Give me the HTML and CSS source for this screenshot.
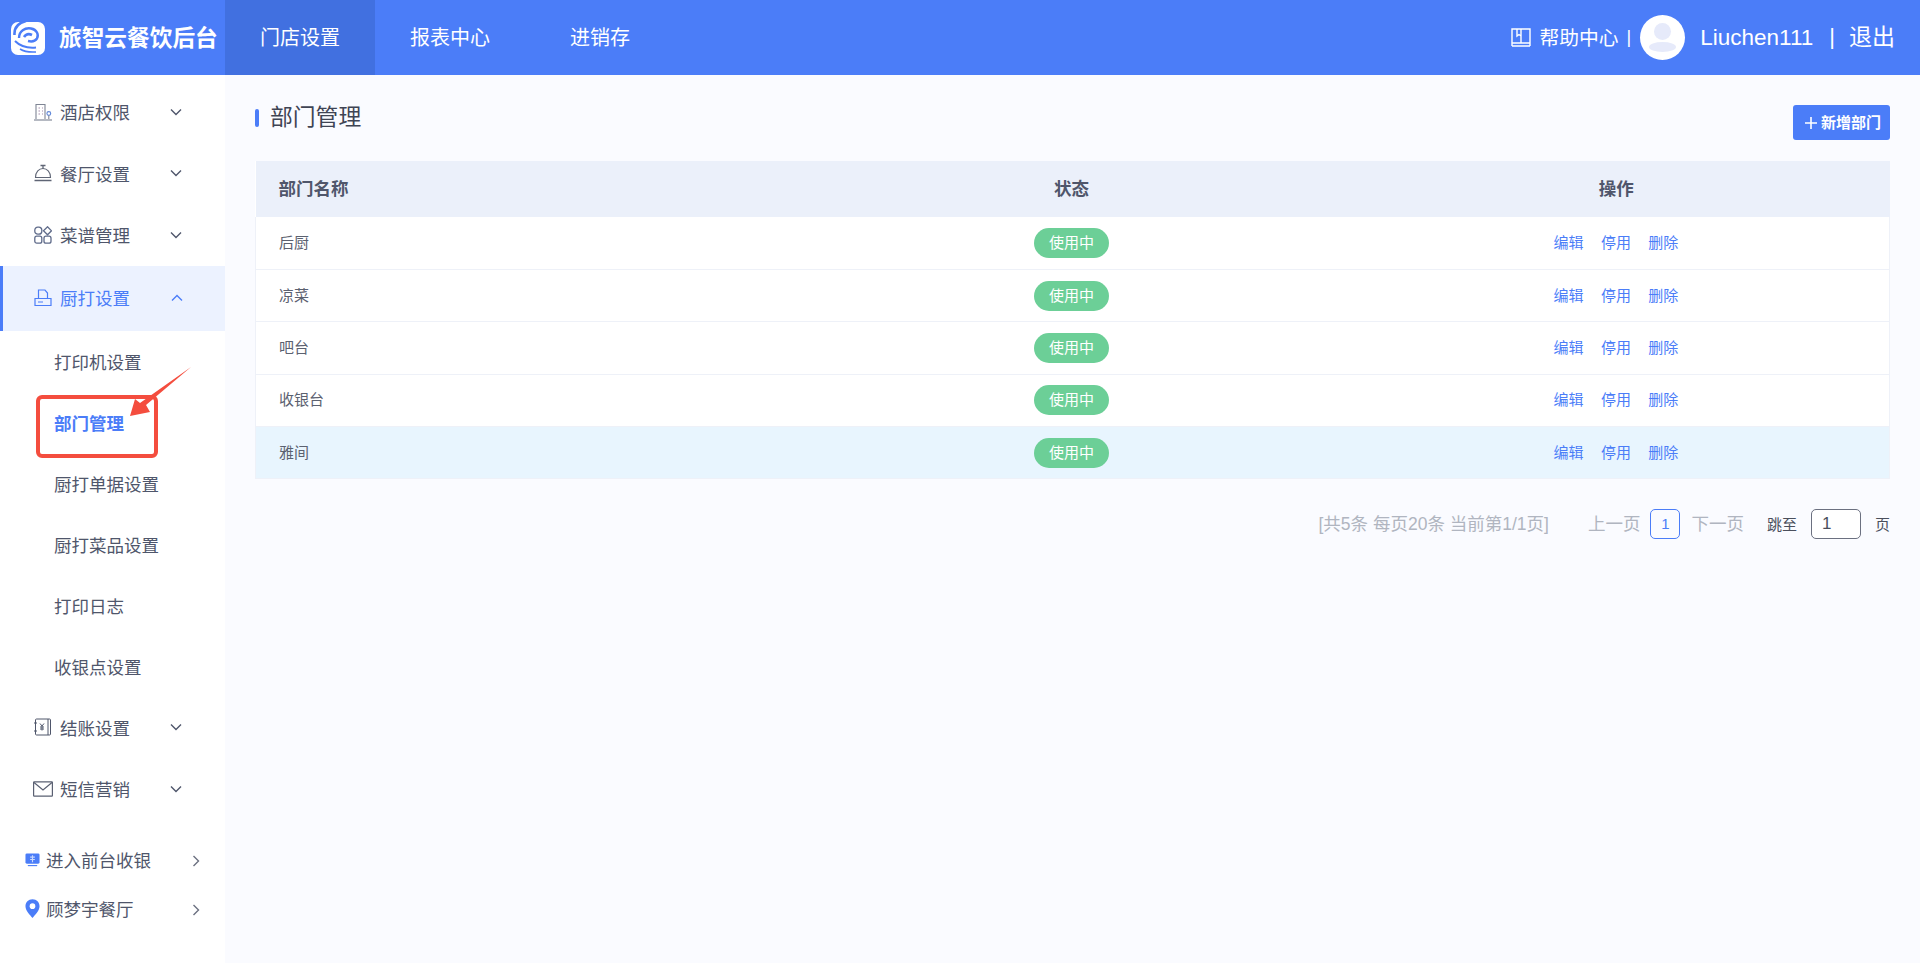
FILE: index.html
```html
<!DOCTYPE html>
<html lang="zh-CN">
<head>
    <meta charset="UTF-8">
    <meta name="viewport" content="width=device-width, initial-scale=1.0">
    <title>部门管理</title>
    <link rel="stylesheet" href="styles.css">
</head>
<body>

    <header class="topbar">
        <div class="brand">
            <svg class="brand-logo" viewBox="0 0 34 33" fill="none" stroke="#4b7df8">
                <rect x="0" y="0" width="34" height="33" rx="7" fill="#fff" stroke="none"/>
                <path stroke-width="2.6" d="M15 -1 C7 1 3 6 3.5 13"/>
                <path stroke-width="2.4" d="M8 16 C8 9 14 5.5 20 6.5 C26 7.5 28 13 26 16.5 C24 19.5 21 20 17 19"/>
                <path stroke-width="2.6" d="M13 15 C15 12 18 11.5 21 13"/>
                <path stroke-width="2" d="M4 19 C9 24 15 26.5 25 25.5"/>
                <path stroke-width="1.5" d="M9 27 C13 29.5 18 30.5 25 30"/>
            </svg>
            <span class="brand-name">旅智云餐饮后台</span>
        </div>
        <nav class="topnav">
            <a class="topnav-item active">门店设置</a>
            <a class="topnav-item">报表中心</a>
            <a class="topnav-item">进销存</a>
        </nav>
        <div class="userbar">
            <svg class="help-icon" viewBox="0 0 20 19" fill="none" stroke="#fff" stroke-width="1.4">
                <path d="M1 1 H19 V15 H1 Z M1 18 H19 M1 15 V18 M19 15 V18"/>
                <path d="M10 1 V15 M6 1 V8 L8 6.5 L10 8"/>
            </svg>
            <span class="help-text">帮助中心</span>
            <span class="help-sep">|</span>
            <span class="avatar"><span class="avatar-head"></span><span class="avatar-body"></span></span>
            <span class="username">Liuchen111</span>
            <span class="user-sep">|</span>
            <span class="logout">退出</span>
        </div>
    </header>

    <div class="layout">
        <aside class="sidebar">
            <a class="menu-item">
                <svg class="menu-icon" viewBox="0 0 18 18" fill="none" stroke="#7f8594" stroke-width="1.1">
                    <path d="M2 16 V1.5 H11 V16"/>
                    <path d="M0 17 H18" stroke-width="1.6" stroke="#a3a8b3"/>
                    <path d="M4.5 5 H6 M8 5 H9 M4.5 8 H6 M8 8 H9 M4.5 11 H6 M8 11 H9" stroke="#a88fb0"/>
                    <circle cx="14.8" cy="10.5" r="1.9" stroke="#5f86d8"/>
                    <path d="M14.8 12.5 V16"/>
                </svg>
                <span class="menu-label">酒店权限</span>
                <svg class="chevron" viewBox="0 0 12 8"><path d="M1 1.5 L6 6.5 L11 1.5"/></svg>
            </a>
            <a class="menu-item">
                <svg class="menu-icon" viewBox="0 0 18 18" fill="none" stroke="#5f6575" stroke-width="1.1">
                    <path d="M1.5 13.5 C1.5 8 5 4.5 9 4.5 C13 4.5 16.5 8 16.5 13.5 Z"/>
                    <path d="M0.5 16.5 H17.5" stroke-width="1.5"/>
                    <path d="M9 4.5 V2 M6.5 1.5 H11.5" stroke-width="1.3"/>
                </svg>
                <span class="menu-label">餐厅设置</span>
                <svg class="chevron" viewBox="0 0 12 8"><path d="M1 1.5 L6 6.5 L11 1.5"/></svg>
            </a>
            <a class="menu-item">
                <svg class="menu-icon" viewBox="0 0 18 18" fill="none" stroke="#5f6b8a" stroke-width="1.3">
                    <rect x="0.8" y="1.2" width="7" height="7" rx="3"/>
                    <path d="M13.5 0.8 L17.5 4.8 L13.5 8.8 L9.5 4.8 Z"/>
                    <rect x="0.8" y="10.2" width="7" height="7" rx="2"/>
                    <rect x="10" y="10.2" width="7" height="7" rx="2"/>
                </svg>
                <span class="menu-label">菜谱管理</span>
                <svg class="chevron" viewBox="0 0 12 8"><path d="M1 1.5 L6 6.5 L11 1.5"/></svg>
            </a>
            <a class="menu-item open">
                <svg class="menu-icon" viewBox="0 0 18 18" fill="none" stroke="#4b7df8" stroke-width="1.2">
                    <path d="M4.5 9.5 V1 H11 L13.5 4 V9.5"/>
                    <path d="M1 9.5 H17 V16.5 H1 Z M4 13 H9"/>
                </svg>
                <span class="menu-label">厨打设置</span>
                <svg class="chevron" viewBox="0 0 12 8"><path d="M1 6.5 L6 1.5 L11 6.5"/></svg>
            </a>
            <a class="submenu-item">打印机设置</a>
            <a class="submenu-item current">部门管理</a>
            <a class="submenu-item">厨打单据设置</a>
            <a class="submenu-item">厨打菜品设置</a>
            <a class="submenu-item">打印日志</a>
            <a class="submenu-item">收银点设置</a>
            <a class="menu-item">
                <svg class="menu-icon" viewBox="0 0 18 18" fill="none" stroke="#4f566b" stroke-width="1">
                    <rect x="1.5" y="1" width="15" height="16" rx="1"/>
                    <path d="M14 1 V17 M0 5 H3 M0 13 H3 M6 5.5 L8 8 L10 5.5 M8 8 V12.5 M6 9 H10 M6 11 H10"/>
                </svg>
                <span class="menu-label">结账设置</span>
                <svg class="chevron" viewBox="0 0 12 8"><path d="M1 1.5 L6 6.5 L11 1.5"/></svg>
            </a>
            <a class="menu-item">
                <svg class="menu-icon mail" viewBox="0 0 20 16" fill="none" stroke="#5a6072" stroke-width="1.2">
                    <rect x="0.6" y="0.8" width="18.8" height="14.4" rx="0.6"/>
                    <path d="M1 1.5 L10 9 L19 1.5"/>
                </svg>
                <span class="menu-label">短信营销</span>
                <svg class="chevron" viewBox="0 0 12 8"><path d="M1 1.5 L6 6.5 L11 1.5"/></svg>
            </a>

            <div class="sidebar-links">
                <a class="link-item">
                    <svg class="link-icon" viewBox="0 0 16 16">
                        <rect x="0.5" y="1.5" width="15" height="11" rx="1.5" fill="#4b7df8"/>
                        <path d="M3 14.5 H13" stroke="#4b7df8" stroke-width="1.2"/>
                        <path d="M8 3.5 V11 M5.5 5.5 H10.5 M5.5 8 H10.5" stroke="#c9d8fd" stroke-width="1.2"/>
                    </svg>
                    <span class="link-label">进入前台收银</span>
                    <svg class="chevron-right" viewBox="0 0 8 12"><path d="M1.5 1 L6.5 6 L1.5 11"/></svg>
                </a>
                <a class="link-item">
                    <svg class="link-icon" viewBox="0 0 16 20">
                        <path fill="#4b7df8" d="M8 0 C3.5 0 0.5 3.3 0.5 7.5 C0.5 12 5 16.5 8 20 C11 16.5 15.5 12 15.5 7.5 C15.5 3.3 12.5 0 8 0 Z"/>
                        <circle cx="8" cy="7.5" r="3" fill="#fff"/>
                    </svg>
                    <span class="link-label">顾梦宇餐厅</span>
                    <svg class="chevron-right" viewBox="0 0 8 12"><path d="M1.5 1 L6.5 6 L1.5 11"/></svg>
                </a>
            </div>
        </aside>

        <main class="content">
            <div class="page-head">
                <h1 class="page-title">部门管理</h1>
                <button class="add-btn">
                    <svg class="add-plus" viewBox="0 0 12 12"><path d="M6 0 V12 M0 6 H12"/></svg>
                    <span class="add-text">新增部门</span>
                </button>
            </div>

            <table class="dept-table">
                <thead>
                    <tr>
                        <th class="col-name">部门名称</th>
                        <th>状态</th>
                        <th>操作</th>
                    </tr>
                </thead>
                <tbody>
                    <tr>
                        <td class="col-name">后厨</td>
                        <td><span class="status">使用中</span></td>
                        <td class="actions"><a>编辑</a><a>停用</a><a>删除</a></td>
                    </tr>
                    <tr>
                        <td class="col-name">凉菜</td>
                        <td><span class="status">使用中</span></td>
                        <td class="actions"><a>编辑</a><a>停用</a><a>删除</a></td>
                    </tr>
                    <tr>
                        <td class="col-name">吧台</td>
                        <td><span class="status">使用中</span></td>
                        <td class="actions"><a>编辑</a><a>停用</a><a>删除</a></td>
                    </tr>
                    <tr>
                        <td class="col-name">收银台</td>
                        <td><span class="status">使用中</span></td>
                        <td class="actions"><a>编辑</a><a>停用</a><a>删除</a></td>
                    </tr>
                    <tr class="hovered">
                        <td class="col-name">雅间</td>
                        <td><span class="status">使用中</span></td>
                        <td class="actions"><a>编辑</a><a>停用</a><a>删除</a></td>
                    </tr>
                </tbody>
            </table>

            <div class="pager">
                <span class="pager-info">[共5条 每页20条 当前第1/1页]</span>
                <span class="pager-link prev">上一页</span>
                <span class="pager-num">1</span>
                <span class="pager-link next">下一页</span>
                <span class="pager-jump">跳至</span>
                <span class="pager-input">1</span>
                <span class="pager-unit">页</span>
            </div>
        </main>
    </div>

    <!-- red annotation drawn on top of the screenshot -->
    <div class="note-box"></div>
    <svg class="note-arrow" viewBox="0 0 70 56">
        <path fill="#f44d3e" d="M67 1 L22 39 L26 46 L6 50 L11 33 L16 37 Z"/>
    </svg>

</body>
</html>
```

FILE: styles.css
```css
* {
    box-sizing: border-box;
}

html, body {
    height: 100%;
}

body {
    margin: 0;
    display: flex;
    flex-direction: column;
    height: 100vh;
    overflow: hidden;
    font-family: "Liberation Sans", "Noto Sans CJK SC", sans-serif;
    background-color: #fafbff;
    color: #4f566b;
}

/* top bar */
.topbar {
    display: flex;
    align-items: center;
    height: 75px;
    flex-shrink: 0;
    background-color: #4b7df8;
    color: #fff;
}

.brand {
    display: flex;
    align-items: center;
    width: 225px;
    height: 100%;
    padding-left: 11px;
}

.brand-logo {
    width: 34px;
    height: 33px;
    margin-top: 2px;
}

.brand-name {
    margin-left: 14px;
    padding-bottom: 3px;
    font-size: 22.7px;
    font-weight: 700;
    white-space: nowrap;
}

.topnav {
    display: flex;
    height: 100%;
}

.topnav-item {
    display: flex;
    align-items: center;
    justify-content: center;
    width: 150px;
    padding-bottom: 2px;
    font-size: 20px;
}

.topnav-item.active {
    background-color: #4170e0;
}

.userbar {
    display: flex;
    align-items: center;
    margin-left: auto;
    padding-right: 25px;
}

.help-icon {
    width: 20px;
    height: 19px;
}

.help-text {
    margin-left: 8px;
    padding-bottom: 2px;
    font-size: 19.8px;
}

.help-sep {
    margin-left: 8px;
    font-size: 18px;
}

.avatar {
    position: relative;
    width: 45px;
    height: 45px;
    margin-left: 9px;
    border-radius: 50%;
    background-color: #fff;
    overflow: hidden;
}

.avatar-head {
    position: absolute;
    left: 14px;
    top: 8px;
    width: 17px;
    height: 17px;
    border-radius: 50%;
    background-color: #e6eafa;
}

.avatar-body {
    position: absolute;
    left: 9px;
    top: 27px;
    width: 27px;
    height: 10px;
    border-radius: 50%;
    background-color: #e6eafa;
}

.username {
    margin-left: 15px;
    font-size: 22.5px;
}

.user-sep {
    margin-left: 16px;
    padding-bottom: 1px;
    font-size: 22px;
}

.logout {
    margin-left: 14px;
    padding-bottom: 5px;
    font-size: 23px;
}

/* body */
.layout {
    display: flex;
    flex: 1;
    min-height: 0;
}

.sidebar {
    width: 225px;
    flex-shrink: 0;
    padding-top: 6px;
    background-color: #fff;
    font-size: 17.5px;
}

.menu-item {
    display: flex;
    align-items: center;
    height: 61.5px;
    padding-left: 34px;
    color: #4f566b;
}

.menu-icon {
    width: 18px;
    height: 18px;
    flex-shrink: 0;
}

.menu-icon.mail {
    width: 20px;
    height: 16px;
    margin-left: -1px;
    margin-right: -1px;
}

.menu-label {
    margin-left: 8px;
}

.chevron {
    width: 12px;
    height: 8px;
    margin-left: 40px;
    fill: none;
    stroke: #4f566b;
    stroke-width: 1.4;
}

.menu-item.open {
    height: 65px;
    padding-left: 31px;
    border-left: 3px solid #4b7df8;
    background-color: #ecf2ff;
    color: #4b7df8;
}

.menu-item.open .menu-label {
    padding-bottom: 2px;
}

.menu-item.open .chevron {
    stroke: #4b7df8;
    margin-left: 41px;
}

.submenu-item {
    display: flex;
    align-items: center;
    height: 61px;
    padding-left: 54px;
    color: #4f566b;
}

.submenu-item.current {
    color: #4b7df8;
    font-weight: 700;
}

.sidebar-links {
    margin-top: 15px;
}

.link-item {
    display: flex;
    align-items: center;
    height: 49px;
    padding-left: 25px;
    color: #4f566b;
}

.link-icon {
    width: 15px;
    height: 19px;
    flex-shrink: 0;
}

.link-label {
    flex: 1;
    margin-left: 6px;
}

.chevron-right {
    width: 8px;
    height: 12px;
    margin-right: 25px;
    margin-top: 4px;
    fill: none;
    stroke: #6b7080;
    stroke-width: 1.4;
}

/* main content */
.content {
    flex: 1;
    min-width: 0;
    padding: 30px 30px 0;
}

.page-head {
    display: flex;
    justify-content: space-between;
    align-items: flex-start;
    height: 35px;
    margin-bottom: 21px;
}

.page-title {
    position: relative;
    margin: 0;
    padding-left: 15px;
    font-size: 22.8px;
    font-weight: 400;
    line-height: 24px;
    color: #3f4454;
}

.page-title::before {
    content: "";
    position: absolute;
    left: 0;
    top: 4px;
    width: 4px;
    height: 18px;
    border-radius: 2px;
    background-color: #4b7df8;
}

.add-btn {
    display: flex;
    align-items: center;
    width: 97px;
    height: 35px;
    padding: 0 0 0 12px;
    border: none;
    border-radius: 3px;
    background-color: #4b7df8;
    color: #fff;
    font-family: inherit;
    font-size: 15px;
    font-weight: 700;
}

.add-plus {
    width: 12px;
    height: 12px;
    fill: none;
    stroke: #fff;
    stroke-width: 1.6;
}

.add-text {
    margin-left: 4px;
    padding-bottom: 2px;
    white-space: nowrap;
}

.dept-table {
    width: 100%;
    border-collapse: collapse;
    table-layout: fixed;
    background-color: #fff;
}

.dept-table th {
    height: 56px;
    padding: 0 2px 3px 0;
    background-color: #ebf0fa;
    font-size: 17.5px;
    font-weight: 700;
    text-align: center;
    color: #4f566b;
}

.dept-table td {
    height: 52.4px;
    padding: 0 2px 0 0;
    border-bottom: 1px solid #eef1f8;
    font-size: 15px;
    text-align: center;
    color: #5b6170;
}

.dept-table td:first-child {
    border-left: 1px solid #eef1f8;
}

.dept-table td:last-child {
    border-right: 1px solid #eef1f8;
}

.dept-table .col-name {
    padding: 0 0 3px 23px;
    text-align: left;
}

.dept-table th.col-name {
    padding: 0 0 3px 23px;
}

.dept-table .actions {
    padding-bottom: 3px;
}

.dept-table tr.hovered td {
    background-color: #e8f5fe;
}

.status {
    display: inline-block;
    width: 75px;
    height: 30px;
    border-radius: 15px;
    background-color: #6ccf97;
    color: #fff;
    font-size: 15px;
    line-height: 30px;
    vertical-align: middle;
}

.actions a {
    margin: 0 8.7px;
    color: #4b7df8;
}

/* pagination */
.pager {
    display: flex;
    align-items: center;
    justify-content: flex-end;
    height: 30px;
    margin-top: 30px;
    font-size: 17.5px;
    color: #b0b5c0;
}

.pager-info,
.pager-link {
    padding-bottom: 3px;
}

.pager-jump,
.pager-unit {
    padding-bottom: 2px;
}

.pager-link.prev {
    margin-left: 39px;
}

.pager-num {
    width: 30px;
    height: 30px;
    margin-left: 10px;
    border: 1px solid #4b7df8;
    border-radius: 5px;
    color: #4b7df8;
    font-size: 15px;
    line-height: 28px;
    text-align: center;
}

.pager-link.next {
    margin-left: 11px;
}

.pager-jump {
    margin-left: 23px;
    font-size: 15px;
    color: #4a4f5c;
}

.pager-input {
    width: 50px;
    height: 30px;
    margin-left: 14px;
    padding-left: 10px;
    border: 1px solid #6b7080;
    border-radius: 5px;
    background-color: #fff;
    color: #4a4f5c;
    font-size: 17px;
    line-height: 28px;
}

.pager-unit {
    margin-left: 14px;
    font-size: 15px;
    color: #4a4f5c;
}

/* annotation */
.note-box {
    position: absolute;
    left: 36px;
    top: 395px;
    width: 122px;
    height: 63px;
    border: 4px solid #f44d3e;
    border-radius: 6px;
}

.note-arrow {
    position: absolute;
    left: 124px;
    top: 366px;
    width: 70px;
    height: 56px;
}
```
